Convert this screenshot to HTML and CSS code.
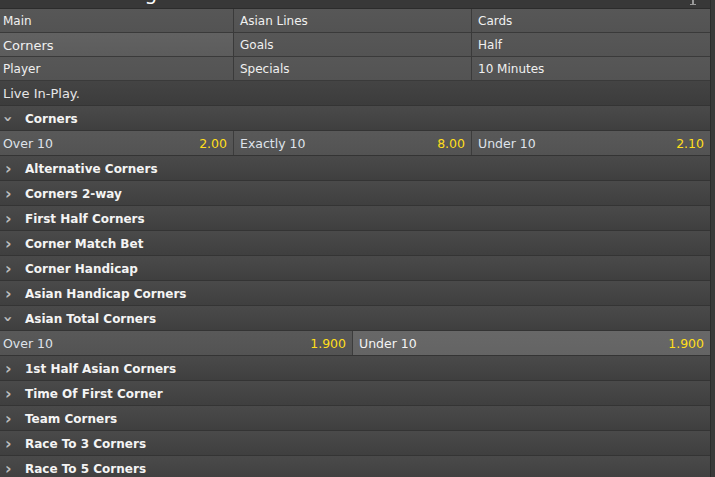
FILE: index.html
```html
<!DOCTYPE html>
<html lang="en">
<head>
    <meta charset="UTF-8">
    <title>Corners</title>
    <link rel="stylesheet" href="styles.css">
</head>
<body>
    <div class="page">
        <div class="title-bar">
            <span class="title">Leeds v Brighton</span>
            <span class="pin"></span>
        </div>

        <div class="tabs">
            <div class="tab">Main</div>
            <div class="tab">Asian Lines</div>
            <div class="tab">Cards</div>
            <div class="tab active">Corners</div>
            <div class="tab">Goals</div>
            <div class="tab">Half</div>
            <div class="tab">Player</div>
            <div class="tab">Specials</div>
            <div class="tab">10 Minutes</div>
        </div>

        <div class="notice">Live In-Play.</div>

        <div class="market open">
            <div class="market-head"><span class="chev">&#x203A;</span>Corners</div>
            <div class="odds three">
                <div class="odd"><span>Over 10</span><span class="price">2.00</span></div>
                <div class="odd"><span>Exactly 10</span><span class="price">8.00</span></div>
                <div class="odd"><span>Under 10</span><span class="price">2.10</span></div>
            </div>
        </div>
        <div class="market"><div class="market-head"><span class="chev">&#x203A;</span>Alternative Corners</div></div>
        <div class="market"><div class="market-head"><span class="chev">&#x203A;</span>Corners 2-way</div></div>
        <div class="market"><div class="market-head"><span class="chev">&#x203A;</span>First Half Corners</div></div>
        <div class="market"><div class="market-head"><span class="chev">&#x203A;</span>Corner Match Bet</div></div>
        <div class="market"><div class="market-head"><span class="chev">&#x203A;</span>Corner Handicap</div></div>
        <div class="market"><div class="market-head"><span class="chev">&#x203A;</span>Asian Handicap Corners</div></div>
        <div class="market open">
            <div class="market-head"><span class="chev">&#x203A;</span>Asian Total Corners</div>
            <div class="odds two">
                <div class="odd"><span>Over 10</span><span class="price">1.900</span></div>
                <div class="odd hover"><span>Under 10</span><span class="price">1.900</span></div>
            </div>
        </div>
        <div class="market"><div class="market-head"><span class="chev">&#x203A;</span>1st Half Asian Corners</div></div>
        <div class="market"><div class="market-head"><span class="chev">&#x203A;</span>Time Of First Corner</div></div>
        <div class="market"><div class="market-head"><span class="chev">&#x203A;</span>Team Corners</div></div>
        <div class="market"><div class="market-head"><span class="chev">&#x203A;</span>Race To 3 Corners</div></div>
        <div class="market"><div class="market-head"><span class="chev">&#x203A;</span>Race To 5 Corners</div></div>
    </div>
</body>
</html>
```

FILE: styles.css
```css
body {
    margin: 0;
    padding: 0;
    background-color: #393939;
    font-family: Tahoma, "DejaVu Sans", sans-serif;
    font-size: 12px;
    color: #e6e6e6;
    overflow: hidden;
}
.page {
    width: 710px;
    border-right: 1px solid #2b2b2b;
    background-color: #3f3f3f;
}
.title-bar {
    height: 8px;
    overflow: hidden;
    position: relative;
    background-color: #383838;
    border-bottom: 1px solid #2c2c2c;
}
.title {
    display: block;
    margin-top: -18px;
    padding-left: 34px;
    font-size: 20px;
    line-height: 22px;
    color: #ffffff;
}
.pin {
    position: absolute;
    right: 14px;
    top: 0;
    width: 6px;
    height: 4px;
    border-bottom: 1px solid #999;
    background: linear-gradient(#999, #999) center / 2px 100% no-repeat;
}
.tabs {
    display: grid;
    grid-template-columns: 233px 237px 1fr;
    column-gap: 1px;
    row-gap: 1px;
    background-color: #3a3a3a;
    border-bottom: 1px solid #3a3a3a;
}
.tab {
    height: 21px;
    line-height: 21px;
    padding: 2px 0 0 6px;
    background: linear-gradient(#575757, #535353);
    color: #f0f0f0;
}
.tab:nth-child(3n+1) {
    padding-left: 3px;
}
.tab.active {
    background: linear-gradient(#626262, #5c5c5c);
    font-size: 13px;
}
.notice {
    height: 23px;
    line-height: 23px;
    padding: 1px 0 0 3px;
    font-size: 13px;
    background: linear-gradient(#444444, #3c3c3c);
    border-bottom: 1px solid #343434;
}
.market-head {
    height: 22px;
    padding-top: 2px;
    line-height: 22px;
    font-weight: bold;
    font-size: 12px;
    color: #f4f4f4;
    background: linear-gradient(#4a4a4a, #3f3f3f);
    border-bottom: 1px solid #343434;
    display: flex;
    align-items: center;
}
.chev {
    width: 25px;
    padding-left: 5px;
    box-sizing: border-box;
    color: #bdbdbd;
    font-weight: bold;
    font-size: 16px;
}
.market.open .chev {
    transform: rotate(90deg);
    width: 10px;
    padding: 0;
    margin: 0 12px 0 3px;
    text-align: center;
}
.odds {
    display: grid;
    column-gap: 1px;
    background-color: #3c3c3c;
    border-bottom: 1px solid #343434;
}
.odds.three {
    grid-template-columns: 233px 237px 1fr;
}
.odds.two {
    grid-template-columns: 352px 1fr;
}
.odd {
    height: 23px;
    line-height: 23px;
    padding: 1px 6px 0 6px;
    display: flex;
    justify-content: space-between;
    font-size: 12.5px;
    color: #dfe3ea;
    background: linear-gradient(#595959, #535353);
}
.odd:first-child {
    padding-left: 3px;
}
.odd.hover {
    background: linear-gradient(#686868, #646464);
    color: #f4f4f4;
}
.price {
    color: #ffdf1b;
}
```
